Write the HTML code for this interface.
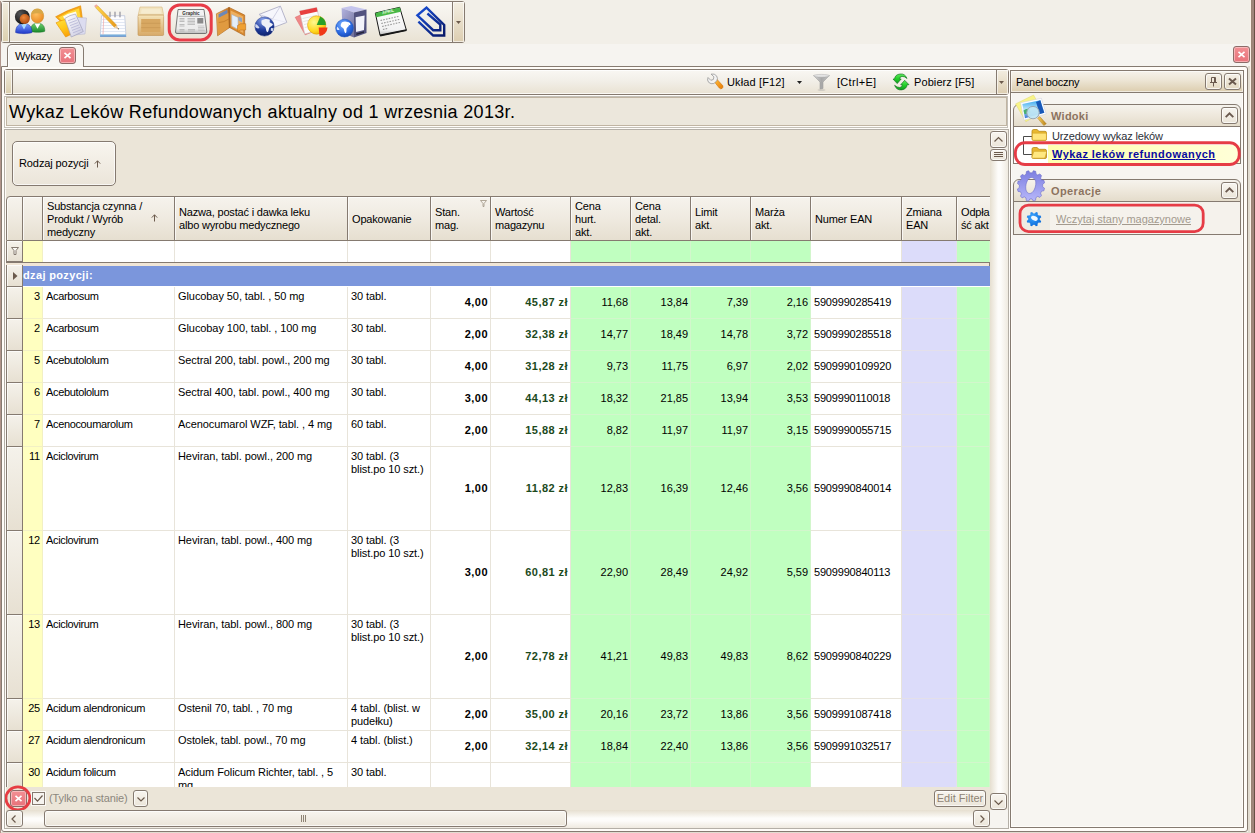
<!DOCTYPE html>
<html lang="pl">
<head>
<meta charset="utf-8">
<title>Wykazy</title>
<style>
*{box-sizing:border-box;margin:0;padding:0}
html,body{width:1255px;height:833px;overflow:hidden}
body{position:relative;background:#f6f4f0;font-family:"Liberation Sans",sans-serif;font-size:11px;letter-spacing:-0.3px;color:#000;line-height:13px}
.abs{position:absolute}
svg{position:absolute;overflow:visible}
#topbg{left:0;top:0;width:1255px;height:44px;background:#f2efe8}
#frameL{left:0;top:1px;width:1px;height:832px;background:#b0948a}
#frameR{left:1248px;top:0;width:7px;height:833px;background:linear-gradient(90deg,#e2dcd0 0,#e2dcd0 2px,#fbefe6 2px,#fbefe6 3px,#9a8474 3px,#9a8474 4px,#a0857a 4px,#a0857a 6px,#685044 6px)}
#frameRtop{left:1248px;top:0;width:2px;height:66px;background:linear-gradient(#f2efe8 0,#f2efe8 44px,#f6f4f0 44px)}
#frameB{left:1px;top:832px;width:1250px;height:1px;background:#e2dcd0}
.tbbg{background:linear-gradient(#f9f7f3,#f2efe8 45%,#e9e2d3);box-shadow:inset 0 0 0 1px rgba(255,255,255,.75)}
#tb{left:1px;top:1px;width:464px;height:42px;border:1px solid #857a70;border-radius:3px}
#tbgrip{left:0;top:0;width:8px;height:40px;border-right:1px solid #857a70;background:linear-gradient(#f1ecde,#dccfae);box-shadow:inset 0 0 0 1px rgba(255,255,255,.7)}
#tbdd{left:450px;top:0;width:12px;height:40px;border-left:1px solid #857a70;background:linear-gradient(#f3eee2,#dccdb0);box-shadow:inset 0 0 0 1px rgba(255,255,255,.6)}
#docframe{left:1px;top:66px;width:1247px;height:766px;border:1px solid #857a70;border-radius:0 3px 3px 3px;background:#fffcf8}
#tab{left:7px;top:44px;width:77px;height:23px;border:1px solid #857a70;border-bottom:none;border-radius:5px 5px 0 0;background:#f8f6f2;box-shadow:inset 1px 1px 0 #fff}
.xbtn{width:17px;height:17px;border:1px solid #8c6c68;border-radius:3px;background:linear-gradient(#f29094,#e8727a);box-shadow:inset 0 0 0 1px rgba(255,220,220,.55)}
#ptb{left:4px;top:69px;width:1005px;height:26px;border:1px solid #857a70;border-radius:3px}
#ptbgrip{left:0;top:0;width:8px;height:24px;border-right:1px solid #857a70;background:linear-gradient(#f1ecde,#dccfae);box-shadow:inset 0 0 0 1px rgba(255,255,255,.7)}
#ptbdd{left:991px;top:0;width:12px;height:24px;border-left:1px solid #857a70;background:linear-gradient(#f3eee2,#dccdb0);box-shadow:inset 0 0 0 1px rgba(255,255,255,.6)}
#titleO{left:4px;top:96px;width:1004px;height:32px;border:1px solid #c4c0b8;background:#fffcf8}
#title{left:6px;top:97px;width:1001px;height:29px;border:1px solid #c0b4a2;background:#ece7dc;font-size:18px;letter-spacing:0.33px;line-height:27px;padding-left:2px;padding-top:1px;white-space:nowrap}
#grid{left:4px;top:129px;width:1005px;height:700px;border:1px solid #b4afa7;background:#fffcf8;overflow:hidden}
#gridin{left:1px;top:0;width:1002px;height:698px;background:#ebe5d8}
.btn{border:1px solid #857a70;border-radius:3px;background:linear-gradient(#f8f5ef,#ebe5d9);box-shadow:inset 0 0 0 1px rgba(255,255,255,.7)}
.hdr{background:linear-gradient(#f6f3ed,#efeae0 50%,#e6dfd0);border-right:1px solid #857a70;border-bottom:1px solid #857a70;border-top:1px solid #857a70;top:67px;height:45px;box-shadow:inset 1px 1px 0 rgba(255,255,255,.7)}
.hdr span{position:absolute;left:4px;white-space:nowrap;letter-spacing:-0.18px}
.cell{white-space:nowrap;overflow:hidden}
.num{text-align:right}
.b{font-weight:bold}
</style>
</head>
<body>
<div class="abs" id="topbg"></div>
<div class="abs" id="docframe"></div>
<div class="abs" id="frameR"></div><div class="abs" id="frameRtop"></div><div class="abs" id="frameL"></div><div class="abs" id="frameB"></div>
<div class="abs tbbg" id="tb"><div class="abs" id="tbgrip"></div><div class="abs" id="tbdd"><svg style="left:3px;top:19px" width="6" height="4"><path d="M0 0h5l-2.5 3z" fill="#6b5a4c"/></svg></div>
<svg style="left:-2px;top:-2px" width="466" height="44" viewBox="0 0 466 44">
<defs>
<radialGradient id="gSkin1" cx="0.4" cy="0.35" r="0.7"><stop offset="0" stop-color="#f08838"/><stop offset="1" stop-color="#a84810"/></radialGradient>
<radialGradient id="gSkin2" cx="0.4" cy="0.35" r="0.7"><stop offset="0" stop-color="#ffc060"/><stop offset="1" stop-color="#e88820"/></radialGradient>
<radialGradient id="gHair" cx="0.35" cy="0.3" r="0.8"><stop offset="0" stop-color="#555"/><stop offset="1" stop-color="#0a0a0a"/></radialGradient>
<linearGradient id="gBlueB" x1="0" y1="0" x2="0" y2="1"><stop offset="0" stop-color="#7aa0ff"/><stop offset="1" stop-color="#2038c8"/></linearGradient>
<linearGradient id="gGreenB" x1="0" y1="0" x2="0" y2="1"><stop offset="0" stop-color="#70d070"/><stop offset="1" stop-color="#1a8a2a"/></linearGradient>
<linearGradient id="gFold" x1="0" y1="0" x2="0.600" y2="1"><stop offset="0" stop-color="#ffe040"/><stop offset="0.500" stop-color="#ffc818"/><stop offset="1" stop-color="#f89808"/></linearGradient>
<linearGradient id="gPaper" x1="0" y1="0" x2="1" y2="1"><stop offset="0" stop-color="#ffffff"/><stop offset="1" stop-color="#c8c8e0"/></linearGradient>
<linearGradient id="gWood" x1="0" y1="0" x2="0" y2="1"><stop offset="0" stop-color="#f3e2b8"/><stop offset="1" stop-color="#d8aa68"/></linearGradient>
<linearGradient id="gNews" x1="0" y1="0" x2="0" y2="1"><stop offset="0" stop-color="#f4f4f4"/><stop offset="0.8" stop-color="#ececec"/><stop offset="1" stop-color="#bdbdbd"/></linearGradient>
<linearGradient id="gWal" x1="0" y1="0" x2="1" y2="0"><stop offset="0" stop-color="#f0b860"/><stop offset="1" stop-color="#c87020"/></linearGradient>
<radialGradient id="gGlobe1" cx="0.400" cy="0.150" r="0.900"><stop offset="0" stop-color="#8aa4ec"/><stop offset="0.6" stop-color="#1e3a9a"/><stop offset="1" stop-color="#0c1e64"/></radialGradient>
<radialGradient id="gGlobe2" cx="0.4" cy="0.3" r="0.8"><stop offset="0" stop-color="#78b0ff"/><stop offset="0.6" stop-color="#2a68e0"/><stop offset="1" stop-color="#1040a8"/></radialGradient>
<radialGradient id="gPie" cx="0.35" cy="0.35" r="0.8"><stop offset="0" stop-color="#fff890"/><stop offset="0.6" stop-color="#ffd820"/><stop offset="1" stop-color="#e8a000"/></radialGradient>
<linearGradient id="gSrv" x1="0" y1="0" x2="0.600" y2="1"><stop offset="0" stop-color="#b4b4e0"/><stop offset="1" stop-color="#74749e"/></linearGradient>
<linearGradient id="gCal" x1="0" y1="0" x2="0" y2="1"><stop offset="0" stop-color="#ffffff"/><stop offset="0.8" stop-color="#f2f2f2"/><stop offset="1" stop-color="#b8b8b8"/></linearGradient>
<linearGradient id="gClip" x1="0" y1="0" x2="1" y2="1"><stop offset="0" stop-color="#1a50d8"/><stop offset="1" stop-color="#081868"/></linearGradient>
<linearGradient id="gPencil" x1="0" y1="0" x2="1" y2="0"><stop offset="0" stop-color="#ffd850"/><stop offset="1" stop-color="#e89818"/></linearGradient>
</defs>

<!-- 1 people -->
<g transform="translate(0 1)">
<path d="M30.400 30.200c0-5 2-8 7.200-8s7.200 3 7.200 8c-2 1.400-12.400 1.400-14.400 0z" fill="url(#gGreenB)" stroke="#187028" stroke-width="0.500"/>
<path d="M34.600 22.600l2.900 5.200 2.900-5.200z" fill="#fff"/>
<ellipse cx="37.400" cy="15" rx="6.300" ry="7" fill="url(#gSkin2)" stroke="#c88820" stroke-width="0.500"/>
<path d="M31.300 13.500c0.300-4 2.800-5.700 6.100-5.700s5.800 1.700 6.100 5.700c-3.800-1.800-8.400-1.800-12.200 0z" fill="#d8a848"/>
<path d="M15.600 31.500c0-5.500 2.500-9 8.200-9s8.200 3.500 8.200 9c-3 1.500-13.400 1.500-16.400 0z" fill="url(#gBlueB)" stroke="#1830a8" stroke-width="0.500"/>
<path d="M21 22.800l3 5.700 3-5.700z" fill="#a8dcff"/>
<circle cx="22.300" cy="15.800" r="7.400" fill="url(#gHair)"/>
<ellipse cx="24.700" cy="18" rx="5" ry="5" fill="url(#gSkin1)"/>
</g>

<!-- 2 folders with documents -->
<g transform="translate(0 1)">
<path d="M55.600 15.800q12-7 25-11l1.800 13-15.400 8.500z" fill="#f8a818" stroke="#e08800" stroke-width="0.600"/>
<path d="M58.500 16.400q10-6 20.500-9.200l1.500 9.500-13.500 7.500z" fill="#ffd838"/>
<path d="M63 15.500q6-3.500 13-5l2 8-10 5z" fill="#fffdf0"/>
<path d="M56 21.800q5-2.500 10-3.500l13.500 11-13.800 6.700z" fill="url(#gFold)" stroke="#e89000" stroke-width="0.600"/>
<path d="M75 16.200l11.500 0.800-1.500 16-11 1z" fill="#dcdcf0" stroke="#b0b0c8" stroke-width="0.500"/>
<path d="M64.800 17.500q5-3.500 10.700-4.500l7.800 17.500-12 5.500z" fill="url(#gPaper)" stroke="#a0a0bc" stroke-width="0.700"/>
<path d="M68 19.800l7.500-2.800M69 22.200l7.800-2.900M70 24.600l8-3M71 27l8.200-3.100M72 29.400l8.400-3.200M73 31.800l8.400-3.200" stroke="#b4b4d4" stroke-width="0.800"/>
</g>

<!-- 3 notepad with pencil -->
<g>
<path d="M101.500 15.700l23.200 0 1.200 19.300-25.600 0z" fill="#fdfdff" stroke="#b4c0d8" stroke-width="0.700"/>
<path d="M100.200 34.500h25.800l0.200 2.300h-26.200z" fill="#7cb4e0"/>
<path d="M100.200 36.300h26" stroke="#5a78b8" stroke-width="0.600"/>
<path d="M101.400 19.500h23.400M101.200 22.500h23.800M101 25.500h24.200M100.800 28.500h24.600M100.600 31.500h25" stroke="#d4dcee" stroke-width="0.700"/>
<path d="M103.800 16l-0.800 18.500" stroke="#f0a8a8" stroke-width="0.700"/>
<path d="M110 12.200v4.600M115 12.200v4.600M120 12.200v4.600" stroke="#a4a4ac" stroke-width="1.500" stroke-linecap="round"/>
<path d="M95.500 7.600l2.200-1.800 19 19.400-2.400 2.100z" fill="url(#gPencil)" stroke="#c88810" stroke-width="0.400"/>
<path d="M114.300 27.300l2.400-2.100 2.200 4.500z" fill="#e8c898"/>
<path d="M117.600 28.400l1.300 1.300-0.300-1.600z" fill="#444"/>
<path d="M95.500 7.600l2.200-1.800-1.400-1.500-2.200 1.800z" fill="#f0a8a0"/>
</g>

<!-- 4 wooden crate -->
<g>
<path d="M140 7l22 0 1.600 8h-25.400z" fill="#f2e4c0" stroke="#d8b880" stroke-width="0.600"/>
<path d="M141.800 9.300h18.400l0.900 4.200h-20.200z" fill="#f6ecd0"/>
<rect x="138" y="15" width="25.600" height="20.500" rx="1" fill="url(#gWood)" stroke="#c09050" stroke-width="0.600"/>
<rect x="141.200" y="19" width="19.200" height="13" fill="#d8a862"/>
<path d="M141.200 23.300h19.200M141.200 27.600h19.200" stroke="#c49450" stroke-width="0.600"/>
<path d="M138.300 16.600h25" stroke="#f4e2b4" stroke-width="1"/>
</g>

<!-- 5 newspaper -->
<g>
<path d="M178 9.500h26l2.800 22.500q0 1.500-1.500 1.500h-28.300q-1.500 0-1.500-1.500z" fill="url(#gNews)" stroke="#5c5c5c" stroke-width="0.8"/>
<path d="M178.500 16.300h25.300" stroke="#888" stroke-width="0.6"/>
<text x="191" y="15.300" text-anchor="middle" font-family="Liberation Sans, sans-serif" font-weight="bold" font-size="4.600" letter-spacing="0" fill="#333">Graphic</text>
<path d="M179.500 18.500h5M179.500 20h5M179.500 21.500h5M179.500 24.500h5M179.500 26h5M179.500 29.500h5M179.500 31h5" stroke="#b0b0b0" stroke-width="0.8"/>
<path d="M187.500 18.500h7.500M187.500 20h7.500M187.500 21.500h7.500M187.500 23h7.500M187.500 24.500h7.500M188 29.500h7M188 31h7" stroke="#b4b4b4" stroke-width="0.8"/>
<rect x="197.300" y="18" width="6" height="5.500" fill="#8a8a8a"/>
<path d="M197.800 26h6.500M198 27.500h6.500M198 29h6.500M198.200 30.500h6.500" stroke="#c0c0c0" stroke-width="0.8"/>
<rect x="169.200" y="5" width="42" height="35" rx="10.500" fill="none" stroke="#e83c48" stroke-width="3"/>
</g>

<!-- 6 wallet -->
<g>
<path d="M216.400 13.800l12.700-6.400 0.500 20.100-12 8.300z" fill="url(#gWal)" stroke="#a86018" stroke-width="0.600"/>
<path d="M218.500 14.200l8.800-4.400 0.200 3.500-8.800 4.600z" fill="#6c88b8"/>
<path d="M217.500 18.500l11.700-6 0.300 14.800-11.500 8z" fill="#e09a40"/>
<path d="M218.800 22.500q5 0 10-3.500" stroke="#b87020" stroke-width="0.600" fill="none"/>
<path d="M229.100 7.400l15.600 7.700 0 20.700-15.100-8.300z" fill="#d88a30" stroke="#a86018" stroke-width="0.600"/>
<path d="M230.600 10.400l12.600 6.200 0 16.400-12.400-6.800z" fill="#eeb060"/>
<path d="M231.700 14.400l6.300 3 0.200 12-6.300-3.400z" fill="#e4eef8" stroke="#98a8c0" stroke-width="0.500"/>
<path d="M238.500 16.500l3.500 1.700v4l-3.500-1.700z" fill="#8ea4c4"/>
<path d="M237.500 25.500l3-1.800h5.200v6.300h-5l-3.200 1.500z" fill="#f0a030" stroke="#b86818" stroke-width="0.500"/>
<path d="M228.300 7.600l1.600 0.200 0.400 19.800-1.400 0.600z" fill="#a86420"/>
</g>

<!-- 7 globe + envelope -->
<g>
<path d="M259.100 14.400l21.300-8.300 6.400 16.300-12.400 4.800z" fill="#f6f6fc" stroke="#9a9ab8" stroke-width="0.700"/>
<path d="M259.100 14.400l13.400 4.600 7.900-12.900" stroke="#c0c0d8" stroke-width="0.700" fill="none"/>
<path d="M272.500 19l14.300 3.400M272.500 19l1.900 8.200" stroke="#dcdcec" stroke-width="0.500" fill="none"/>
<circle cx="264.500" cy="26.500" r="9.600" fill="url(#gGlobe1)" stroke="#20388c" stroke-width="0.500"/>
<path d="M261.500 20.500c2.500-1.800 5.500-2 8-1 1 1.500-0.800 2.500 1 3.300 1.200 0.800 2.200 0.500 2.400 2-1 1.800-2.800 1.500-3.700 3.200-0.700 1.600-0.200 3-1.600 4.300-1.700-0.900-1.400-3.200-2.100-4.800-1-1.500-3.200-1.800-3.900-3.500-0.200-1.300-0.300-2.500-0.100-3.500z" fill="#eef0f8"/>
<path d="M255.500 24c1.800 0.600 3 2.100 4 3.800-1.300 1.200-2.800 0.600-4.300-0.800z" fill="#d0d8f0"/>
<path d="M271 28l2.500 0.200-0.800 3.300-2-1z" fill="#d0d8f0"/>
</g>

<!-- 8 calendar + pie chart -->
<g>
<path d="M295.200 17.300l8-3.500 8.500 18.500-6.500 2.500z" fill="#f08888" stroke="#d86060" stroke-width="0.5"/>
<path d="M299.500 11.100l17.200-3.600 5 22-17 4.500z" fill="#fbfbfb" stroke="#c8b8b8" stroke-width="0.6"/>
<path d="M299.500 11.100l17.200-3.600 0.900 4.100-17 3.700z" fill="#e84040"/>
<path d="M302.500 18.500l14-3M303.300 21.500l8-1.800M304 24.500l7-1.500M304.800 27.500l7-1.500" stroke="#d8d8d8" stroke-width="0.7"/>
<circle cx="316.700" cy="25" r="9.200" fill="url(#gPie)" stroke="#d89800" stroke-width="0.5"/>
<path d="M316.700 25l3.500-8.500a9.200 9.200 0 0 1 5.700 8.500z" fill="#28a028"/>
<path d="M318.700 27.500h8.800a9 9 0 0 1-8 8.500z" fill="#f03818"/>
</g>

<!-- 9 server + globe -->
<g>
<path d="M341.600 8l9.600-2 15.300 3.600-12.500 3z" fill="#c4c4ec"/>
<path d="M341.600 8l12.400 4.600 0 25-11.400-4.600z" fill="url(#gSrv)"/>
<path d="M354 12.600l12.500-3 0 23.400-12.500 4.600z" fill="#52527e"/>
<path d="M355.600 17.300l9-1.900-0.600 14.600-7.900 2z" fill="#f2f2fa"/>
<path d="M356.300 33.500l7.700-2.200v1.400l-7.700 2.300z" fill="#24243a"/>
<circle cx="344.500" cy="28.100" r="8.900" fill="url(#gGlobe2)" stroke="#1c50b8" stroke-width="0.500"/>
<path d="M342 22.200c2-1 4-1 6 0 1 1.200-0.500 2.200 1 3 -0.500 1.800-2 2-2.500 3.500 -0.300 1.500 0.500 3-0.800 4.500 -1.500-0.800-1.500-3-2-4.500 -1-1.200-2.500-1.500-3-3 0-1.200 0.500-2.500 1.300-3.500z" fill="#fff"/>
<path d="M347.500 21.800l2.500 1.200 0.500 2-2 0.200z" fill="#fff"/>
<path d="M337 26.700c1 0.500 2 1.500 2.500 3 -0.800 0.500-1.800 0.500-2.800-0.500z" fill="#e0ecff"/>
</g>

<!-- 10 calendar -->
<g>
<path d="M375.300 13l24.400-5.700 6.700 22.900-26.300 5.300z" fill="url(#gCal)" stroke="#181818" stroke-width="1"/>
<path d="M375.300 13l24.400-5.700 1.300 4.400-24.600 5.500z" fill="#48b848"/>
<path d="M380.100 35.500l26.300-5.300" stroke="#181818" stroke-width="1.800"/>
<text x="388.300" y="12.800" text-anchor="middle" transform="rotate(-13 388.300 12.800)" font-family="Liberation Sans, sans-serif" font-weight="bold" font-size="4" letter-spacing="0" fill="#e8ffe8">APRIL</text>
<path d="M380.500 20.500l19-4.300M381.300 23.500l19-4.300M382.100 26.500l19-4.300M382.900 29.500l5-1.100" stroke="#9a9a9a" stroke-width="1.100" stroke-dasharray="1.600 1.200"/>
</g>

<!-- 11 paperclip -->
<g fill="none" stroke="url(#gClip)" stroke-width="2.400" stroke-linejoin="miter">
<path d="M418.400 21.600l14.800 13.900h11v-10.600l-17.700-17.200-9.100 7.700 15.800 14.800h7.100v-5.700l-12.900-11"/>
</g>
</svg>

</div>
<div class="abs" id="tab"><span class="abs" style="left:7px;top:5px">Wykazy</span><div class="abs xbtn" style="left:51px;top:2px"><svg style="left:4px;top:4px" width="7" height="7"><path d="M0.500 0.800l6 5.400M6.500 0.800l-6 5.400" stroke="#fff" stroke-width="1.600" fill="none"/></svg></div></div>
<div class="abs xbtn" style="left:1233px;top:46px"><svg style="left:4px;top:4px" width="7" height="7"><path d="M0.500 0.800l6 5.400M6.500 0.800l-6 5.400" stroke="#fff" stroke-width="1.600" fill="none"/></svg></div>
<div class="abs tbbg" id="ptb"><div class="abs" id="ptbgrip"></div><div class="abs" id="ptbdd"><svg style="left:2px;top:11px" width="6" height="4"><path d="M0 0h5l-2.5 3z" fill="#6b5a4c"/></svg></div>
<span class="abs" style="left:722px;top:6px;white-space:nowrap;letter-spacing:0.14px">Układ [F12]</span>
<svg style="left:792px;top:11px" width="6" height="4"><path d="M0 0h5l-2.5 3z" fill="#222"/></svg>
<span class="abs" style="left:832px;top:6px;white-space:nowrap;letter-spacing:0.3px">[Ctrl+E]</span>
<span class="abs" style="left:909px;top:6px;white-space:nowrap;letter-spacing:0.09px">Pobierz [F5]</span>
<svg style="left:-5px;top:-70px" width="1010" height="96" viewBox="0 0 1010 96">
<defs>
<linearGradient id="gWr" x1="0" y1="0" x2="1" y2="1"><stop offset="0" stop-color="#ffc040"/><stop offset="1" stop-color="#e87800"/></linearGradient>
<linearGradient id="gFun" x1="0" y1="0" x2="1" y2="0"><stop offset="0" stop-color="#d8d8d8"/><stop offset="0.5" stop-color="#a8a8a8"/><stop offset="1" stop-color="#c8c8c8"/></linearGradient>
<linearGradient id="gRef" x1="0" y1="0" x2="0" y2="1"><stop offset="0" stop-color="#60e860"/><stop offset="0.500" stop-color="#22d028"/><stop offset="1" stop-color="#109a20"/></linearGradient>
</defs>
<!-- wrench -->
<path d="M714.500 82l2.600-2.600 5.600 6.200q1 1.800-0.600 2.800t-2.800-0.400z" fill="url(#gWr)" stroke="#c86800" stroke-width="0.5"/>
<path d="M708 77.500l2.800 2.800 2.500-0.800 0.600-2.600-2.800-2.800q3.500-0.800 5.500 1.800 1.500 2.500 0.300 4.800l-3 2.800q-3 1-5.300-1.200-1.800-2.200-0.600-4.800z" fill="#f2f2f2" stroke="#8c8c8c" stroke-width="0.7"/>
<!-- funnel -->
<path d="M813.600 75.500h15.800l-6.400 6.500v6.500l-3 0.800v-7.300z" fill="url(#gFun)" stroke="#909090" stroke-width="0.5"/>
<ellipse cx="821.500" cy="75.800" rx="7.900" ry="1.400" fill="#e4e4e4" stroke="#a0a0a0" stroke-width="0.4"/>
<ellipse cx="821.500" cy="90" rx="4" ry="0.800" fill="#c8c4bc"/>
<!-- refresh -->
<path d="M907 78.500Q905 73.300 900 74Q895 74.600 894.500 79L893 79L897.200 83.600L901.200 79L899.600 79Q899.800 76.600 902 76.400Q904.500 76.200 907 78.500Z" fill="url(#gRef)" stroke="#0c6a1a" stroke-width="0.600" stroke-linejoin="round"/>
<path d="M894.600 85.300Q896.500 90.400 901.500 89.900Q906.500 89.300 907.200 84.700L909 84.700L904.700 80.300L900.700 84.700L902.400 84.700Q902 87.300 899.800 87.500Q897 87.500 894.600 85.300Z" fill="url(#gRef)" stroke="#0c6a1a" stroke-width="0.600" stroke-linejoin="round"/>
</svg>

</div>
<div class="abs" id="titleO"></div>
<div class="abs" id="title">Wykaz Leków Refundowanych aktualny od 1 wrzesnia 2013r.</div>
<div class="abs" id="grid"><div class="abs" id="gridin">
<div class="abs btn" style="left:6px;top:11px;width:104px;height:45px;border-radius:5px"><span class="abs" style="left:6px;top:15px;white-space:nowrap;letter-spacing:-0.1px">Rodzaj pozycji</span><svg style="left:81px;top:18px" width="8" height="8"><path d="M3.500 0.800v6.700M0.800 3.600l2.700-2.800 2.700 2.800" stroke="#6b5a4c" fill="none" stroke-width="1"/></svg></div>
<div class="abs hdr" style="left:0px;top:66px;width:17px;height:45px;border-left:1px solid #857a70;border-radius:4px 0 0 0"></div>
<div class="abs hdr" style="left:17px;top:66px;width:20px;height:45px"></div>
<div class="abs hdr" style="left:37px;top:66px;width:132px;height:45px"><span style="top:3px">Substancja czynna /</span><span style="top:16px">Produkt / Wyrób</span><span style="top:29px">medyczny</span><svg style="left:108px;top:17px" width="8" height="8"><path d="M3.500 0.800v6.700M0.800 3.600l2.700-2.800 2.700 2.800" stroke="#6b5a4c" fill="none" stroke-width="1"/></svg></div>
<div class="abs hdr" style="left:169px;top:66px;width:173px;height:45px"><span style="top:9px">Nazwa, postać i dawka leku</span><span style="top:22px">albo wyrobu medycznego</span></div>
<div class="abs hdr" style="left:342px;top:66px;width:83px;height:45px"><span style="top:16px">Opakowanie</span></div>
<div class="abs hdr" style="left:425px;top:66px;width:60px;height:45px"><span style="top:9px">Stan.</span><span style="top:22px">mag.</span><svg style="left:49px;top:3px" width="7" height="7"><path d="M0.5 0.5h6l-2.5 3v3h-1v-3z" stroke="#a09484" fill="#f6f3ed" stroke-width="0.8"/></svg></div>
<div class="abs hdr" style="left:485px;top:66px;width:80px;height:45px"><span style="top:9px">Wartość</span><span style="top:22px">magazynu</span></div>
<div class="abs hdr" style="left:565px;top:66px;width:60px;height:45px"><span style="top:3px">Cena</span><span style="top:16px">hurt.</span><span style="top:29px">akt.</span></div>
<div class="abs hdr" style="left:625px;top:66px;width:60px;height:45px"><span style="top:3px">Cena</span><span style="top:16px">detal.</span><span style="top:29px">akt.</span></div>
<div class="abs hdr" style="left:685px;top:66px;width:60px;height:45px"><span style="top:9px">Limit</span><span style="top:22px">akt.</span></div>
<div class="abs hdr" style="left:745px;top:66px;width:60px;height:45px"><span style="top:9px">Marża</span><span style="top:22px">akt.</span></div>
<div class="abs hdr" style="left:805px;top:66px;width:91px;height:45px"><span style="top:16px">Numer EAN</span></div>
<div class="abs hdr" style="left:896px;top:66px;width:55px;height:45px"><span style="top:9px">Zmiana</span><span style="top:22px">EAN</span></div>
<div class="abs hdr" style="left:951px;top:66px;width:33px;height:45px;border-right:none;overflow:hidden"><span style="top:9px">Odpła</span><span style="top:22px">ść akt</span></div>
<div class="abs" style="left:984px;top:0;width:18px;height:698px;background:linear-gradient(90deg,#e6dfd0,#fdfcfa 45%,#fdfcfa 60%,#efeae0)"></div>
<div class="abs" style="left:17px;top:111px;width:20px;height:546px;background:#ffffc0;border-right:1px solid #f2f0c4"></div>
<div class="abs" style="left:37px;top:111px;width:132px;height:546px;background:#fff;border-right:1px solid #e8e4da"></div>
<div class="abs" style="left:169px;top:111px;width:173px;height:546px;background:#fff;border-right:1px solid #e8e4da"></div>
<div class="abs" style="left:342px;top:111px;width:83px;height:546px;background:#fff;border-right:1px solid #e8e4da"></div>
<div class="abs" style="left:425px;top:111px;width:60px;height:546px;background:#fff;border-right:1px solid #e8e4da"></div>
<div class="abs" style="left:485px;top:111px;width:80px;height:546px;background:#fff;border-right:1px solid #e8e4da"></div>
<div class="abs" style="left:565px;top:111px;width:60px;height:546px;background:#c0ffc0;border-right:1px solid #d2f6cc"></div>
<div class="abs" style="left:625px;top:111px;width:60px;height:546px;background:#c0ffc0;border-right:1px solid #d2f6cc"></div>
<div class="abs" style="left:685px;top:111px;width:60px;height:546px;background:#c0ffc0;border-right:1px solid #d2f6cc"></div>
<div class="abs" style="left:745px;top:111px;width:60px;height:546px;background:#c0ffc0;border-right:1px solid #d2f6cc"></div>
<div class="abs" style="left:805px;top:111px;width:91px;height:546px;background:#fff;border-right:1px solid #e8e4da"></div>
<div class="abs" style="left:896px;top:111px;width:55px;height:546px;background:#dcdcfa;border-right:1px solid #e4e0ea"></div>
<div class="abs" style="left:951px;top:111px;width:33px;height:546px;background:#c0ffc0;border-right:1px solid #d2f6cc"></div>
<div class="abs" style="left:0;top:111px;width:17px;height:21px;border:1px solid #857a70;border-top:none;background:linear-gradient(#f5f2eb,#e7e0d2);box-shadow:inset 1px 1px 0 rgba(255,255,255,.7)"></div>
<svg style="left:5px;top:117px" width="8" height="9"><path d="M0.500 0.500h7l-2.500 3v4h-2v-4z" stroke="#857a70" fill="#fbf9f5" stroke-width="1"/></svg>
<div class="abs" style="left:0;top:132px;width:984px;height:4px;background:#f1e6d6;border-top:1px solid #857a70;border-right:1px solid #857a70"></div>
<div class="abs" style="left:17px;top:136px;width:967px;height:20px;background:#7b96dc"></div>
<div class="abs" style="left:17px;top:156px;width:967px;height:1px;background:#fff"></div>
<div class="abs" style="left:0;top:135px;width:17px;height:22px;border:1px solid #857a70;border-top:none;background:linear-gradient(#f5f2eb,#e7e0d2);box-shadow:inset 1px 1px 0 rgba(255,255,255,.7)"></div>
<svg style="left:7px;top:142px" width="5" height="9"><path d="M0 0l4.500 4L0 8z" fill="#6b5a4c"/></svg>
<span class="abs b" style="left:17px;top:139px;color:#fff;white-space:nowrap;letter-spacing:0.35px">dzaj pozycji:</span>
<div class="abs" style="left:17px;top:188px;width:20px;height:1px;background:#f2f0c4"></div>
<div class="abs" style="left:37px;top:188px;width:132px;height:1px;background:#e8e4da"></div>
<div class="abs" style="left:169px;top:188px;width:173px;height:1px;background:#e8e4da"></div>
<div class="abs" style="left:342px;top:188px;width:83px;height:1px;background:#e8e4da"></div>
<div class="abs" style="left:425px;top:188px;width:60px;height:1px;background:#e8e4da"></div>
<div class="abs" style="left:485px;top:188px;width:80px;height:1px;background:#e8e4da"></div>
<div class="abs" style="left:565px;top:188px;width:60px;height:1px;background:#d2f6cc"></div>
<div class="abs" style="left:625px;top:188px;width:60px;height:1px;background:#d2f6cc"></div>
<div class="abs" style="left:685px;top:188px;width:60px;height:1px;background:#d2f6cc"></div>
<div class="abs" style="left:745px;top:188px;width:60px;height:1px;background:#d2f6cc"></div>
<div class="abs" style="left:805px;top:188px;width:91px;height:1px;background:#e8e4da"></div>
<div class="abs" style="left:896px;top:188px;width:55px;height:1px;background:#e4e0ea"></div>
<div class="abs" style="left:951px;top:188px;width:33px;height:1px;background:#d2f6cc"></div>
<div class="abs" style="left:0;top:157px;width:17px;height:32px;border:1px solid #857a70;border-top:none;background:linear-gradient(#f5f2eb,#e7e0d2);box-shadow:inset 1px 1px 0 rgba(255,255,255,.7)"></div>
<div class="abs cell num" style="left:17px;top:160px;width:20px;padding-right:3px;letter-spacing:-0.2px">3</div>
<div class="abs cell " style="left:40px;top:160px;width:129px;letter-spacing:-0.35px">Acarbosum</div>
<div class="abs cell " style="left:172px;top:160px;width:170px;letter-spacing:-0.08px">Glucobay 50, tabl. , 50 mg</div>
<div class="abs cell " style="left:345px;top:160px;width:80px;letter-spacing:-0.08px">30 tabl.</div>
<div class="abs cell num b" style="left:425px;top:166px;width:60px;padding-right:3px;letter-spacing:0.45px">4,00</div>
<div class="abs cell num b" style="left:485px;top:166px;width:80px;padding-right:3px;letter-spacing:0.45px;color:#1c4a1c">45,87 zł</div>
<div class="abs cell num" style="left:565px;top:166px;width:60px;padding-right:3px;letter-spacing:-0.02px">11,68</div>
<div class="abs cell num" style="left:625px;top:166px;width:60px;padding-right:3px;letter-spacing:-0.02px">13,84</div>
<div class="abs cell num" style="left:685px;top:166px;width:60px;padding-right:3px;letter-spacing:-0.02px">7,39</div>
<div class="abs cell num" style="left:745px;top:166px;width:60px;padding-right:3px;letter-spacing:-0.02px">2,16</div>
<div class="abs cell " style="left:808px;top:166px;width:88px;letter-spacing:-0.19px">5909990285419</div>
<div class="abs" style="left:17px;top:220px;width:20px;height:1px;background:#f2f0c4"></div>
<div class="abs" style="left:37px;top:220px;width:132px;height:1px;background:#e8e4da"></div>
<div class="abs" style="left:169px;top:220px;width:173px;height:1px;background:#e8e4da"></div>
<div class="abs" style="left:342px;top:220px;width:83px;height:1px;background:#e8e4da"></div>
<div class="abs" style="left:425px;top:220px;width:60px;height:1px;background:#e8e4da"></div>
<div class="abs" style="left:485px;top:220px;width:80px;height:1px;background:#e8e4da"></div>
<div class="abs" style="left:565px;top:220px;width:60px;height:1px;background:#d2f6cc"></div>
<div class="abs" style="left:625px;top:220px;width:60px;height:1px;background:#d2f6cc"></div>
<div class="abs" style="left:685px;top:220px;width:60px;height:1px;background:#d2f6cc"></div>
<div class="abs" style="left:745px;top:220px;width:60px;height:1px;background:#d2f6cc"></div>
<div class="abs" style="left:805px;top:220px;width:91px;height:1px;background:#e8e4da"></div>
<div class="abs" style="left:896px;top:220px;width:55px;height:1px;background:#e4e0ea"></div>
<div class="abs" style="left:951px;top:220px;width:33px;height:1px;background:#d2f6cc"></div>
<div class="abs" style="left:0;top:189px;width:17px;height:32px;border:1px solid #857a70;border-top:none;background:linear-gradient(#f5f2eb,#e7e0d2);box-shadow:inset 1px 1px 0 rgba(255,255,255,.7)"></div>
<div class="abs cell num" style="left:17px;top:192px;width:20px;padding-right:3px;letter-spacing:-0.2px">2</div>
<div class="abs cell " style="left:40px;top:192px;width:129px;letter-spacing:-0.35px">Acarbosum</div>
<div class="abs cell " style="left:172px;top:192px;width:170px;letter-spacing:-0.08px">Glucobay 100, tabl. , 100 mg</div>
<div class="abs cell " style="left:345px;top:192px;width:80px;letter-spacing:-0.08px">30 tabl.</div>
<div class="abs cell num b" style="left:425px;top:198px;width:60px;padding-right:3px;letter-spacing:0.45px">2,00</div>
<div class="abs cell num b" style="left:485px;top:198px;width:80px;padding-right:3px;letter-spacing:0.45px;color:#1c4a1c">32,38 zł</div>
<div class="abs cell num" style="left:565px;top:198px;width:60px;padding-right:3px;letter-spacing:-0.02px">14,77</div>
<div class="abs cell num" style="left:625px;top:198px;width:60px;padding-right:3px;letter-spacing:-0.02px">18,49</div>
<div class="abs cell num" style="left:685px;top:198px;width:60px;padding-right:3px;letter-spacing:-0.02px">14,78</div>
<div class="abs cell num" style="left:745px;top:198px;width:60px;padding-right:3px;letter-spacing:-0.02px">3,72</div>
<div class="abs cell " style="left:808px;top:198px;width:88px;letter-spacing:-0.19px">5909990285518</div>
<div class="abs" style="left:17px;top:252px;width:20px;height:1px;background:#f2f0c4"></div>
<div class="abs" style="left:37px;top:252px;width:132px;height:1px;background:#e8e4da"></div>
<div class="abs" style="left:169px;top:252px;width:173px;height:1px;background:#e8e4da"></div>
<div class="abs" style="left:342px;top:252px;width:83px;height:1px;background:#e8e4da"></div>
<div class="abs" style="left:425px;top:252px;width:60px;height:1px;background:#e8e4da"></div>
<div class="abs" style="left:485px;top:252px;width:80px;height:1px;background:#e8e4da"></div>
<div class="abs" style="left:565px;top:252px;width:60px;height:1px;background:#d2f6cc"></div>
<div class="abs" style="left:625px;top:252px;width:60px;height:1px;background:#d2f6cc"></div>
<div class="abs" style="left:685px;top:252px;width:60px;height:1px;background:#d2f6cc"></div>
<div class="abs" style="left:745px;top:252px;width:60px;height:1px;background:#d2f6cc"></div>
<div class="abs" style="left:805px;top:252px;width:91px;height:1px;background:#e8e4da"></div>
<div class="abs" style="left:896px;top:252px;width:55px;height:1px;background:#e4e0ea"></div>
<div class="abs" style="left:951px;top:252px;width:33px;height:1px;background:#d2f6cc"></div>
<div class="abs" style="left:0;top:221px;width:17px;height:32px;border:1px solid #857a70;border-top:none;background:linear-gradient(#f5f2eb,#e7e0d2);box-shadow:inset 1px 1px 0 rgba(255,255,255,.7)"></div>
<div class="abs cell num" style="left:17px;top:224px;width:20px;padding-right:3px;letter-spacing:-0.2px">5</div>
<div class="abs cell " style="left:40px;top:224px;width:129px;letter-spacing:-0.35px">Acebutololum</div>
<div class="abs cell " style="left:172px;top:224px;width:170px;letter-spacing:-0.08px">Sectral 200, tabl. powl., 200 mg</div>
<div class="abs cell " style="left:345px;top:224px;width:80px;letter-spacing:-0.08px">30 tabl.</div>
<div class="abs cell num b" style="left:425px;top:230px;width:60px;padding-right:3px;letter-spacing:0.45px">4,00</div>
<div class="abs cell num b" style="left:485px;top:230px;width:80px;padding-right:3px;letter-spacing:0.45px;color:#1c4a1c">31,28 zł</div>
<div class="abs cell num" style="left:565px;top:230px;width:60px;padding-right:3px;letter-spacing:-0.02px">9,73</div>
<div class="abs cell num" style="left:625px;top:230px;width:60px;padding-right:3px;letter-spacing:-0.02px">11,75</div>
<div class="abs cell num" style="left:685px;top:230px;width:60px;padding-right:3px;letter-spacing:-0.02px">6,97</div>
<div class="abs cell num" style="left:745px;top:230px;width:60px;padding-right:3px;letter-spacing:-0.02px">2,02</div>
<div class="abs cell " style="left:808px;top:230px;width:88px;letter-spacing:-0.19px">5909990109920</div>
<div class="abs" style="left:17px;top:284px;width:20px;height:1px;background:#f2f0c4"></div>
<div class="abs" style="left:37px;top:284px;width:132px;height:1px;background:#e8e4da"></div>
<div class="abs" style="left:169px;top:284px;width:173px;height:1px;background:#e8e4da"></div>
<div class="abs" style="left:342px;top:284px;width:83px;height:1px;background:#e8e4da"></div>
<div class="abs" style="left:425px;top:284px;width:60px;height:1px;background:#e8e4da"></div>
<div class="abs" style="left:485px;top:284px;width:80px;height:1px;background:#e8e4da"></div>
<div class="abs" style="left:565px;top:284px;width:60px;height:1px;background:#d2f6cc"></div>
<div class="abs" style="left:625px;top:284px;width:60px;height:1px;background:#d2f6cc"></div>
<div class="abs" style="left:685px;top:284px;width:60px;height:1px;background:#d2f6cc"></div>
<div class="abs" style="left:745px;top:284px;width:60px;height:1px;background:#d2f6cc"></div>
<div class="abs" style="left:805px;top:284px;width:91px;height:1px;background:#e8e4da"></div>
<div class="abs" style="left:896px;top:284px;width:55px;height:1px;background:#e4e0ea"></div>
<div class="abs" style="left:951px;top:284px;width:33px;height:1px;background:#d2f6cc"></div>
<div class="abs" style="left:0;top:253px;width:17px;height:32px;border:1px solid #857a70;border-top:none;background:linear-gradient(#f5f2eb,#e7e0d2);box-shadow:inset 1px 1px 0 rgba(255,255,255,.7)"></div>
<div class="abs cell num" style="left:17px;top:256px;width:20px;padding-right:3px;letter-spacing:-0.2px">6</div>
<div class="abs cell " style="left:40px;top:256px;width:129px;letter-spacing:-0.35px">Acebutololum</div>
<div class="abs cell " style="left:172px;top:256px;width:170px;letter-spacing:-0.08px">Sectral 400, tabl. powl., 400 mg</div>
<div class="abs cell " style="left:345px;top:256px;width:80px;letter-spacing:-0.08px">30 tabl.</div>
<div class="abs cell num b" style="left:425px;top:262px;width:60px;padding-right:3px;letter-spacing:0.45px">3,00</div>
<div class="abs cell num b" style="left:485px;top:262px;width:80px;padding-right:3px;letter-spacing:0.45px;color:#1c4a1c">44,13 zł</div>
<div class="abs cell num" style="left:565px;top:262px;width:60px;padding-right:3px;letter-spacing:-0.02px">18,32</div>
<div class="abs cell num" style="left:625px;top:262px;width:60px;padding-right:3px;letter-spacing:-0.02px">21,85</div>
<div class="abs cell num" style="left:685px;top:262px;width:60px;padding-right:3px;letter-spacing:-0.02px">13,94</div>
<div class="abs cell num" style="left:745px;top:262px;width:60px;padding-right:3px;letter-spacing:-0.02px">3,53</div>
<div class="abs cell " style="left:808px;top:262px;width:88px;letter-spacing:-0.19px">5909990110018</div>
<div class="abs" style="left:17px;top:316px;width:20px;height:1px;background:#f2f0c4"></div>
<div class="abs" style="left:37px;top:316px;width:132px;height:1px;background:#e8e4da"></div>
<div class="abs" style="left:169px;top:316px;width:173px;height:1px;background:#e8e4da"></div>
<div class="abs" style="left:342px;top:316px;width:83px;height:1px;background:#e8e4da"></div>
<div class="abs" style="left:425px;top:316px;width:60px;height:1px;background:#e8e4da"></div>
<div class="abs" style="left:485px;top:316px;width:80px;height:1px;background:#e8e4da"></div>
<div class="abs" style="left:565px;top:316px;width:60px;height:1px;background:#d2f6cc"></div>
<div class="abs" style="left:625px;top:316px;width:60px;height:1px;background:#d2f6cc"></div>
<div class="abs" style="left:685px;top:316px;width:60px;height:1px;background:#d2f6cc"></div>
<div class="abs" style="left:745px;top:316px;width:60px;height:1px;background:#d2f6cc"></div>
<div class="abs" style="left:805px;top:316px;width:91px;height:1px;background:#e8e4da"></div>
<div class="abs" style="left:896px;top:316px;width:55px;height:1px;background:#e4e0ea"></div>
<div class="abs" style="left:951px;top:316px;width:33px;height:1px;background:#d2f6cc"></div>
<div class="abs" style="left:0;top:285px;width:17px;height:32px;border:1px solid #857a70;border-top:none;background:linear-gradient(#f5f2eb,#e7e0d2);box-shadow:inset 1px 1px 0 rgba(255,255,255,.7)"></div>
<div class="abs cell num" style="left:17px;top:288px;width:20px;padding-right:3px;letter-spacing:-0.2px">7</div>
<div class="abs cell " style="left:40px;top:288px;width:129px;letter-spacing:-0.35px">Acenocoumarolum</div>
<div class="abs cell " style="left:172px;top:288px;width:170px;letter-spacing:-0.08px">Acenocumarol WZF, tabl. , 4 mg</div>
<div class="abs cell " style="left:345px;top:288px;width:80px;letter-spacing:-0.08px">60 tabl.</div>
<div class="abs cell num b" style="left:425px;top:294px;width:60px;padding-right:3px;letter-spacing:0.45px">2,00</div>
<div class="abs cell num b" style="left:485px;top:294px;width:80px;padding-right:3px;letter-spacing:0.45px;color:#1c4a1c">15,88 zł</div>
<div class="abs cell num" style="left:565px;top:294px;width:60px;padding-right:3px;letter-spacing:-0.02px">8,82</div>
<div class="abs cell num" style="left:625px;top:294px;width:60px;padding-right:3px;letter-spacing:-0.02px">11,97</div>
<div class="abs cell num" style="left:685px;top:294px;width:60px;padding-right:3px;letter-spacing:-0.02px">11,97</div>
<div class="abs cell num" style="left:745px;top:294px;width:60px;padding-right:3px;letter-spacing:-0.02px">3,15</div>
<div class="abs cell " style="left:808px;top:294px;width:88px;letter-spacing:-0.19px">5909990055715</div>
<div class="abs" style="left:17px;top:400px;width:20px;height:1px;background:#f2f0c4"></div>
<div class="abs" style="left:37px;top:400px;width:132px;height:1px;background:#e8e4da"></div>
<div class="abs" style="left:169px;top:400px;width:173px;height:1px;background:#e8e4da"></div>
<div class="abs" style="left:342px;top:400px;width:83px;height:1px;background:#e8e4da"></div>
<div class="abs" style="left:425px;top:400px;width:60px;height:1px;background:#e8e4da"></div>
<div class="abs" style="left:485px;top:400px;width:80px;height:1px;background:#e8e4da"></div>
<div class="abs" style="left:565px;top:400px;width:60px;height:1px;background:#d2f6cc"></div>
<div class="abs" style="left:625px;top:400px;width:60px;height:1px;background:#d2f6cc"></div>
<div class="abs" style="left:685px;top:400px;width:60px;height:1px;background:#d2f6cc"></div>
<div class="abs" style="left:745px;top:400px;width:60px;height:1px;background:#d2f6cc"></div>
<div class="abs" style="left:805px;top:400px;width:91px;height:1px;background:#e8e4da"></div>
<div class="abs" style="left:896px;top:400px;width:55px;height:1px;background:#e4e0ea"></div>
<div class="abs" style="left:951px;top:400px;width:33px;height:1px;background:#d2f6cc"></div>
<div class="abs" style="left:0;top:317px;width:17px;height:84px;border:1px solid #857a70;border-top:none;background:linear-gradient(#f5f2eb,#e7e0d2);box-shadow:inset 1px 1px 0 rgba(255,255,255,.7)"></div>
<div class="abs cell num" style="left:17px;top:320px;width:20px;padding-right:3px;letter-spacing:-0.2px">11</div>
<div class="abs cell " style="left:40px;top:320px;width:129px;letter-spacing:-0.35px">Aciclovirum</div>
<div class="abs cell " style="left:172px;top:320px;width:170px;letter-spacing:-0.08px">Heviran, tabl. powl., 200 mg</div>
<div class="abs cell " style="left:345px;top:320px;width:80px;letter-spacing:-0.08px">30 tabl. (3</div>
<div class="abs cell " style="left:345px;top:333px;width:80px;letter-spacing:-0.08px">blist.po 10 szt.)</div>
<div class="abs cell num b" style="left:425px;top:352px;width:60px;padding-right:3px;letter-spacing:0.45px">1,00</div>
<div class="abs cell num b" style="left:485px;top:352px;width:80px;padding-right:3px;letter-spacing:0.45px;color:#1c4a1c">11,82 zł</div>
<div class="abs cell num" style="left:565px;top:352px;width:60px;padding-right:3px;letter-spacing:-0.02px">12,83</div>
<div class="abs cell num" style="left:625px;top:352px;width:60px;padding-right:3px;letter-spacing:-0.02px">16,39</div>
<div class="abs cell num" style="left:685px;top:352px;width:60px;padding-right:3px;letter-spacing:-0.02px">12,46</div>
<div class="abs cell num" style="left:745px;top:352px;width:60px;padding-right:3px;letter-spacing:-0.02px">3,56</div>
<div class="abs cell " style="left:808px;top:352px;width:88px;letter-spacing:-0.19px">5909990840014</div>
<div class="abs" style="left:17px;top:484px;width:20px;height:1px;background:#f2f0c4"></div>
<div class="abs" style="left:37px;top:484px;width:132px;height:1px;background:#e8e4da"></div>
<div class="abs" style="left:169px;top:484px;width:173px;height:1px;background:#e8e4da"></div>
<div class="abs" style="left:342px;top:484px;width:83px;height:1px;background:#e8e4da"></div>
<div class="abs" style="left:425px;top:484px;width:60px;height:1px;background:#e8e4da"></div>
<div class="abs" style="left:485px;top:484px;width:80px;height:1px;background:#e8e4da"></div>
<div class="abs" style="left:565px;top:484px;width:60px;height:1px;background:#d2f6cc"></div>
<div class="abs" style="left:625px;top:484px;width:60px;height:1px;background:#d2f6cc"></div>
<div class="abs" style="left:685px;top:484px;width:60px;height:1px;background:#d2f6cc"></div>
<div class="abs" style="left:745px;top:484px;width:60px;height:1px;background:#d2f6cc"></div>
<div class="abs" style="left:805px;top:484px;width:91px;height:1px;background:#e8e4da"></div>
<div class="abs" style="left:896px;top:484px;width:55px;height:1px;background:#e4e0ea"></div>
<div class="abs" style="left:951px;top:484px;width:33px;height:1px;background:#d2f6cc"></div>
<div class="abs" style="left:0;top:401px;width:17px;height:84px;border:1px solid #857a70;border-top:none;background:linear-gradient(#f5f2eb,#e7e0d2);box-shadow:inset 1px 1px 0 rgba(255,255,255,.7)"></div>
<div class="abs cell num" style="left:17px;top:404px;width:20px;padding-right:3px;letter-spacing:-0.2px">12</div>
<div class="abs cell " style="left:40px;top:404px;width:129px;letter-spacing:-0.35px">Aciclovirum</div>
<div class="abs cell " style="left:172px;top:404px;width:170px;letter-spacing:-0.08px">Heviran, tabl. powl., 400 mg</div>
<div class="abs cell " style="left:345px;top:404px;width:80px;letter-spacing:-0.08px">30 tabl. (3</div>
<div class="abs cell " style="left:345px;top:417px;width:80px;letter-spacing:-0.08px">blist.po 10 szt.)</div>
<div class="abs cell num b" style="left:425px;top:436px;width:60px;padding-right:3px;letter-spacing:0.45px">3,00</div>
<div class="abs cell num b" style="left:485px;top:436px;width:80px;padding-right:3px;letter-spacing:0.45px;color:#1c4a1c">60,81 zł</div>
<div class="abs cell num" style="left:565px;top:436px;width:60px;padding-right:3px;letter-spacing:-0.02px">22,90</div>
<div class="abs cell num" style="left:625px;top:436px;width:60px;padding-right:3px;letter-spacing:-0.02px">28,49</div>
<div class="abs cell num" style="left:685px;top:436px;width:60px;padding-right:3px;letter-spacing:-0.02px">24,92</div>
<div class="abs cell num" style="left:745px;top:436px;width:60px;padding-right:3px;letter-spacing:-0.02px">5,59</div>
<div class="abs cell " style="left:808px;top:436px;width:88px;letter-spacing:-0.19px">5909990840113</div>
<div class="abs" style="left:17px;top:568px;width:20px;height:1px;background:#f2f0c4"></div>
<div class="abs" style="left:37px;top:568px;width:132px;height:1px;background:#e8e4da"></div>
<div class="abs" style="left:169px;top:568px;width:173px;height:1px;background:#e8e4da"></div>
<div class="abs" style="left:342px;top:568px;width:83px;height:1px;background:#e8e4da"></div>
<div class="abs" style="left:425px;top:568px;width:60px;height:1px;background:#e8e4da"></div>
<div class="abs" style="left:485px;top:568px;width:80px;height:1px;background:#e8e4da"></div>
<div class="abs" style="left:565px;top:568px;width:60px;height:1px;background:#d2f6cc"></div>
<div class="abs" style="left:625px;top:568px;width:60px;height:1px;background:#d2f6cc"></div>
<div class="abs" style="left:685px;top:568px;width:60px;height:1px;background:#d2f6cc"></div>
<div class="abs" style="left:745px;top:568px;width:60px;height:1px;background:#d2f6cc"></div>
<div class="abs" style="left:805px;top:568px;width:91px;height:1px;background:#e8e4da"></div>
<div class="abs" style="left:896px;top:568px;width:55px;height:1px;background:#e4e0ea"></div>
<div class="abs" style="left:951px;top:568px;width:33px;height:1px;background:#d2f6cc"></div>
<div class="abs" style="left:0;top:485px;width:17px;height:84px;border:1px solid #857a70;border-top:none;background:linear-gradient(#f5f2eb,#e7e0d2);box-shadow:inset 1px 1px 0 rgba(255,255,255,.7)"></div>
<div class="abs cell num" style="left:17px;top:488px;width:20px;padding-right:3px;letter-spacing:-0.2px">13</div>
<div class="abs cell " style="left:40px;top:488px;width:129px;letter-spacing:-0.35px">Aciclovirum</div>
<div class="abs cell " style="left:172px;top:488px;width:170px;letter-spacing:-0.08px">Heviran, tabl. powl., 800 mg</div>
<div class="abs cell " style="left:345px;top:488px;width:80px;letter-spacing:-0.08px">30 tabl. (3</div>
<div class="abs cell " style="left:345px;top:501px;width:80px;letter-spacing:-0.08px">blist.po 10 szt.)</div>
<div class="abs cell num b" style="left:425px;top:520px;width:60px;padding-right:3px;letter-spacing:0.45px">2,00</div>
<div class="abs cell num b" style="left:485px;top:520px;width:80px;padding-right:3px;letter-spacing:0.45px;color:#1c4a1c">72,78 zł</div>
<div class="abs cell num" style="left:565px;top:520px;width:60px;padding-right:3px;letter-spacing:-0.02px">41,21</div>
<div class="abs cell num" style="left:625px;top:520px;width:60px;padding-right:3px;letter-spacing:-0.02px">49,83</div>
<div class="abs cell num" style="left:685px;top:520px;width:60px;padding-right:3px;letter-spacing:-0.02px">49,83</div>
<div class="abs cell num" style="left:745px;top:520px;width:60px;padding-right:3px;letter-spacing:-0.02px">8,62</div>
<div class="abs cell " style="left:808px;top:520px;width:88px;letter-spacing:-0.19px">5909990840229</div>
<div class="abs" style="left:17px;top:600px;width:20px;height:1px;background:#f2f0c4"></div>
<div class="abs" style="left:37px;top:600px;width:132px;height:1px;background:#e8e4da"></div>
<div class="abs" style="left:169px;top:600px;width:173px;height:1px;background:#e8e4da"></div>
<div class="abs" style="left:342px;top:600px;width:83px;height:1px;background:#e8e4da"></div>
<div class="abs" style="left:425px;top:600px;width:60px;height:1px;background:#e8e4da"></div>
<div class="abs" style="left:485px;top:600px;width:80px;height:1px;background:#e8e4da"></div>
<div class="abs" style="left:565px;top:600px;width:60px;height:1px;background:#d2f6cc"></div>
<div class="abs" style="left:625px;top:600px;width:60px;height:1px;background:#d2f6cc"></div>
<div class="abs" style="left:685px;top:600px;width:60px;height:1px;background:#d2f6cc"></div>
<div class="abs" style="left:745px;top:600px;width:60px;height:1px;background:#d2f6cc"></div>
<div class="abs" style="left:805px;top:600px;width:91px;height:1px;background:#e8e4da"></div>
<div class="abs" style="left:896px;top:600px;width:55px;height:1px;background:#e4e0ea"></div>
<div class="abs" style="left:951px;top:600px;width:33px;height:1px;background:#d2f6cc"></div>
<div class="abs" style="left:0;top:569px;width:17px;height:32px;border:1px solid #857a70;border-top:none;background:linear-gradient(#f5f2eb,#e7e0d2);box-shadow:inset 1px 1px 0 rgba(255,255,255,.7)"></div>
<div class="abs cell num" style="left:17px;top:572px;width:20px;padding-right:3px;letter-spacing:-0.2px">25</div>
<div class="abs cell " style="left:40px;top:572px;width:129px;letter-spacing:-0.35px">Acidum alendronicum</div>
<div class="abs cell " style="left:172px;top:572px;width:170px;letter-spacing:-0.08px">Ostenil 70, tabl. , 70 mg</div>
<div class="abs cell " style="left:345px;top:572px;width:80px;letter-spacing:-0.08px">4 tabl. (blist. w</div>
<div class="abs cell " style="left:345px;top:585px;width:80px;letter-spacing:-0.08px">pudełku)</div>
<div class="abs cell num b" style="left:425px;top:578px;width:60px;padding-right:3px;letter-spacing:0.45px">2,00</div>
<div class="abs cell num b" style="left:485px;top:578px;width:80px;padding-right:3px;letter-spacing:0.45px;color:#1c4a1c">35,00 zł</div>
<div class="abs cell num" style="left:565px;top:578px;width:60px;padding-right:3px;letter-spacing:-0.02px">20,16</div>
<div class="abs cell num" style="left:625px;top:578px;width:60px;padding-right:3px;letter-spacing:-0.02px">23,72</div>
<div class="abs cell num" style="left:685px;top:578px;width:60px;padding-right:3px;letter-spacing:-0.02px">13,86</div>
<div class="abs cell num" style="left:745px;top:578px;width:60px;padding-right:3px;letter-spacing:-0.02px">3,56</div>
<div class="abs cell " style="left:808px;top:578px;width:88px;letter-spacing:-0.19px">5909991087418</div>
<div class="abs" style="left:17px;top:632px;width:20px;height:1px;background:#f2f0c4"></div>
<div class="abs" style="left:37px;top:632px;width:132px;height:1px;background:#e8e4da"></div>
<div class="abs" style="left:169px;top:632px;width:173px;height:1px;background:#e8e4da"></div>
<div class="abs" style="left:342px;top:632px;width:83px;height:1px;background:#e8e4da"></div>
<div class="abs" style="left:425px;top:632px;width:60px;height:1px;background:#e8e4da"></div>
<div class="abs" style="left:485px;top:632px;width:80px;height:1px;background:#e8e4da"></div>
<div class="abs" style="left:565px;top:632px;width:60px;height:1px;background:#d2f6cc"></div>
<div class="abs" style="left:625px;top:632px;width:60px;height:1px;background:#d2f6cc"></div>
<div class="abs" style="left:685px;top:632px;width:60px;height:1px;background:#d2f6cc"></div>
<div class="abs" style="left:745px;top:632px;width:60px;height:1px;background:#d2f6cc"></div>
<div class="abs" style="left:805px;top:632px;width:91px;height:1px;background:#e8e4da"></div>
<div class="abs" style="left:896px;top:632px;width:55px;height:1px;background:#e4e0ea"></div>
<div class="abs" style="left:951px;top:632px;width:33px;height:1px;background:#d2f6cc"></div>
<div class="abs" style="left:0;top:601px;width:17px;height:32px;border:1px solid #857a70;border-top:none;background:linear-gradient(#f5f2eb,#e7e0d2);box-shadow:inset 1px 1px 0 rgba(255,255,255,.7)"></div>
<div class="abs cell num" style="left:17px;top:604px;width:20px;padding-right:3px;letter-spacing:-0.2px">27</div>
<div class="abs cell " style="left:40px;top:604px;width:129px;letter-spacing:-0.35px">Acidum alendronicum</div>
<div class="abs cell " style="left:172px;top:604px;width:170px;letter-spacing:-0.08px">Ostolek, tabl. powl., 70 mg</div>
<div class="abs cell " style="left:345px;top:604px;width:80px;letter-spacing:-0.08px">4 tabl. (blist.)</div>
<div class="abs cell num b" style="left:425px;top:610px;width:60px;padding-right:3px;letter-spacing:0.45px">2,00</div>
<div class="abs cell num b" style="left:485px;top:610px;width:80px;padding-right:3px;letter-spacing:0.45px;color:#1c4a1c">32,14 zł</div>
<div class="abs cell num" style="left:565px;top:610px;width:60px;padding-right:3px;letter-spacing:-0.02px">18,84</div>
<div class="abs cell num" style="left:625px;top:610px;width:60px;padding-right:3px;letter-spacing:-0.02px">22,40</div>
<div class="abs cell num" style="left:685px;top:610px;width:60px;padding-right:3px;letter-spacing:-0.02px">13,86</div>
<div class="abs cell num" style="left:745px;top:610px;width:60px;padding-right:3px;letter-spacing:-0.02px">3,56</div>
<div class="abs cell " style="left:808px;top:610px;width:88px;letter-spacing:-0.19px">5909991032517</div>
<div class="abs" style="left:0;top:633px;width:17px;height:24px;border:1px solid #857a70;border-top:none;border-bottom:none;background:linear-gradient(#f5f2eb,#e7e0d2);box-shadow:inset 1px 1px 0 rgba(255,255,255,.7)"></div>
<div class="abs cell num" style="left:17px;top:636px;width:20px;padding-right:3px;letter-spacing:-0.2px">30</div>
<div class="abs cell " style="left:40px;top:636px;width:129px;letter-spacing:-0.35px">Acidum folicum</div>
<div class="abs cell " style="left:172px;top:636px;width:170px;letter-spacing:-0.08px">Acidum Folicum Richter, tabl. , 5</div>
<div class="abs cell " style="left:172px;top:649px;width:170px;letter-spacing:-0.08px;height:8px">mg</div>
<div class="abs cell " style="left:345px;top:636px;width:80px;letter-spacing:-0.08px">30 tabl.</div>
<div class="abs" style="left:0;top:657px;width:984px;height:24px;background:#ebe5d8"></div>
<div class="abs" style="left:984px;top:680px;width:18px;height:18px;background:#f6f4f0"></div>
<div class="abs xbtn" style="left:4px;top:660px"><svg style="left:4px;top:4px" width="7" height="7"><path d="M0.500 0.800l6 5.400M6.500 0.800l-6 5.400" stroke="#fff" stroke-width="1.600" fill="none"/></svg></div>
<svg style="left:-2px;top:655px" width="28" height="28"><ellipse cx="13.900" cy="13.300" rx="12" ry="11.500" fill="none" stroke="#e63c42" stroke-width="2.800"/></svg>
<div class="abs" style="left:26px;top:662px;width:13px;height:13px;border:1px solid #857a70;background:#f6f4f0;box-shadow:0 0 0 1px #fbf9f5"><svg style="left:1px;top:2px" width="9" height="7"><path d="M0.5 3l3 3.200L8.500 0.500" stroke="#6b5a4c" fill="none" stroke-width="1.200"/></svg></div>
<span class="abs" style="left:43px;top:662px;color:#8c877d;white-space:nowrap;letter-spacing:-0.12px">(Tylko na stanie)</span>
<div class="abs btn" style="left:127px;top:660px;width:15px;height:17px"><svg style="left:3px;top:6px" width="8" height="5"><path d="M0.5 0.5l3.500 3.500 3.500-3.500" stroke="#6b5a4c" fill="none" stroke-width="1.200"/></svg></div>
<div class="abs btn" style="left:928px;top:660px;width:52px;height:17px;color:#8f8474;text-align:center;line-height:15px;white-space:nowrap;letter-spacing:0">Edit Filter</div>
<div class="abs" style="left:0;top:680px;width:984px;height:18px;background:linear-gradient(#e6dfd0,#fdfcfa 45%,#fdfcfa 60%,#efeae0)"></div>
<div class="abs btn" style="left:0;top:680px;width:17px;height:17px"><svg style="left:4px;top:4px" width="5" height="8"><path d="M4.500 0.500L1 4l3.500 3.500" stroke="#6b5a4c" fill="none" stroke-width="1.200"/></svg></div>
<div class="abs btn" style="left:967px;top:680px;width:17px;height:17px"><svg style="left:6px;top:4px" width="5" height="8"><path d="M0.500 0.500L4 4 0.500 7.500" stroke="#6b5a4c" fill="none" stroke-width="1.200"/></svg></div>
<div class="abs btn" style="left:38px;top:680px;width:523px;height:17px"><svg style="left:256px;top:4px" width="6" height="7"><path d="M0.500 0v7M2.500 0v7M4.500 0v7" stroke="#8f8474" stroke-width="1"/></svg></div>
<div class="abs btn" style="left:984px;top:1px;width:17px;height:17px"><svg style="left:3px;top:5px" width="9" height="5"><path d="M0.500 4.500l4-4 4 4" stroke="#6b5a4c" fill="none" stroke-width="1.200"/></svg></div>
<div class="abs btn" style="left:984px;top:19px;width:17px;height:12px"><svg style="left:3px;top:2px" width="9" height="6"><path d="M0 0.500h9M0 2.500h9M0 4.500h9" stroke="#6b5a4c" stroke-width="1"/></svg></div>
<div class="abs btn" style="left:984px;top:663px;width:17px;height:17px"><svg style="left:3px;top:6px" width="9" height="5"><path d="M0.500 0.500l4 4 4-4" stroke="#6b5a4c" fill="none" stroke-width="1.200"/></svg></div>
</div></div>
<div class="abs" id="side" style="left:1010px;top:70px;width:234px;height:758px;border:1px solid #857a70;background:#f7f5f1;box-shadow:inset 0 0 0 1px #fffdfa"><div class="abs" style="left:0;top:-1px;width:232px;height:300px">
<div class="abs" style="left:0;top:1px;width:232px;height:22px;background:linear-gradient(#f6f3ec,#eee7d8 40%,#dccdae);border-bottom:1px solid #857a70;box-shadow:inset 0 0 0 1px rgba(255,255,255,.6)"></div>
<span class="abs" style="left:5px;top:6px;letter-spacing:-0.22px;white-space:nowrap">Panel boczny</span>
<div class="abs btn" style="left:194px;top:3px;width:17px;height:17px;background:linear-gradient(#f5f1e8,#e4d9c2)"><svg style="left:0;top:0" width="15" height="15"><path d="M5.500 3.500h4v5h-4zM8.500 3.500v5M4 8.500h7M7.500 9v3.500" stroke="#6b5a4f" fill="none" stroke-width="1"/></svg></div>
<div class="abs btn" style="left:213px;top:3px;width:17px;height:17px;background:linear-gradient(#f5f1e8,#e4d9c2)"><svg style="left:0;top:0" width="15" height="15"><path d="M4 4.500l7 6M11 4.500l-7 6" stroke="#6b5a4f" stroke-width="2" fill="none"/></svg></div>

<!-- Widoki group -->
<div class="abs" style="left:2px;top:34px;width:228px;height:23px;border:1px solid #857a70;border-radius:6px 6px 0 0;background:linear-gradient(#f6f3ed,#eee8dc 50%,#e4dccb)"></div>
<span class="abs b" style="left:40px;top:40px;color:#8c735f;letter-spacing:0.27px;white-space:nowrap">Widoki</span>
<div class="abs btn" style="left:210px;top:37px;width:17px;height:17px"><svg style="left:3px;top:4px" width="9" height="6"><path d="M0.7 5.2L4.5 1.3l3.8 3.9" stroke="#6b5a4f" fill="none" stroke-width="1.900"/></svg></div>
<div class="abs" style="left:2px;top:56px;width:228px;height:38px;border:1px solid #857a70;background:#fff"></div>
<div class="abs" style="left:37px;top:75px;width:192px;height:18px;background:linear-gradient(90deg,#ffffb0,#ffffd8)"></div>
<svg style="left:11px;top:59px" width="30" height="36"><path d="M1.5 7.5h9M1.5 7.5v18h9" stroke="#4a4a4a" fill="none" stroke-width="1"/></svg>
<svg style="left:20px;top:58px" width="17" height="14" viewBox="0 0 17 14"><path d="M1 3.200q0-1.700 1.700-1.700h3.300l2 1.800h6q1.500 0 1.500 1.500v6.200q0 1.500-1.500 1.500h-11.300q-1.700 0-1.700-1.500z" fill="#e8b830" stroke="#b88a18" stroke-width="0.8"/><path d="M1.400 5.200h14v6q0 1-1.200 1h-11.600q-1.200 0-1.200-1z" fill="#ffe47a" stroke="#c89a20" stroke-width="0.5"/></svg>
<svg style="left:20px;top:76px" width="17" height="14" viewBox="0 0 17 14"><path d="M1 3.200q0-1.700 1.700-1.700h3.300l2 1.800h6q1.500 0 1.500 1.500v6.200q0 1.500-1.500 1.500h-11.300q-1.700 0-1.700-1.500z" fill="#e8b830" stroke="#b88a18" stroke-width="0.8"/><path d="M2.800 5.300h11.800q1.200 0 0.900 1.200l-1.300 4.700q-0.300 1-1.400 1h-11q-1.200 0-0.800-1.200z" fill="#ffe880" stroke="#c89a20" stroke-width="0.6"/></svg>
<span class="abs" style="left:41px;top:60px;color:#2c3038;letter-spacing:-0.14px;white-space:nowrap">Urzędowy wykaz leków</span>
<span class="abs b" style="left:41px;top:78px;color:#0a0aa0;text-decoration:underline;letter-spacing:0.46px;white-space:nowrap">Wykaz leków refundowanych</span>
<svg style="left:0;top:0" width="232" height="100"><rect x="4.400" y="72.750" width="223.800" height="21.750" rx="9.500" fill="none" stroke="#e63c46" stroke-width="2.800"/></svg>

<!-- Operacje group -->
<div class="abs" style="left:2px;top:109px;width:228px;height:23px;border:1px solid #857a70;border-radius:6px 6px 0 0;background:linear-gradient(#f6f3ed,#eee8dc 50%,#e4dccb)"></div>
<span class="abs b" style="left:40px;top:115px;color:#8c735f;letter-spacing:0.39px;white-space:nowrap">Operacje</span>
<div class="abs btn" style="left:210px;top:112px;width:17px;height:17px"><svg style="left:3px;top:4px" width="9" height="6"><path d="M0.7 5.2L4.5 1.3l3.8 3.9" stroke="#6b5a4f" fill="none" stroke-width="1.900"/></svg></div>
<div class="abs" style="left:2px;top:131px;width:228px;height:34px;border:1px solid #857a70;background:#f5f2ec"></div>
<div class="abs" style="left:3px;top:132px;width:36px;height:32px;background:#efebe3"></div>
<span class="abs" style="left:45px;top:143px;color:#a39a8e;text-decoration:underline;letter-spacing:-0.03px;white-space:nowrap">Wczytaj stany magazynowe</span>
<svg style="left:0;top:0" width="60" height="170"><defs><radialGradient id="gSg" cx="0.4" cy="0.35" r="0.7"><stop offset="0" stop-color="#40a8ff"/><stop offset="1" stop-color="#0868d8"/></radialGradient></defs><path d="M30.2 151.0 L29.9 152.0 L29.5 152.8 L27.6 152.6 L27.1 153.2 L26.5 153.7 L26.7 155.5 L25.8 155.9 L24.9 156.3 L23.7 154.8 L23.0 154.9 L22.2 154.8 L21.0 156.2 L20.1 155.9 L19.2 155.5 L19.4 153.7 L18.8 153.2 L18.3 152.6 L16.5 152.8 L16.1 151.9 L15.7 151.0 L17.2 149.8 L17.2 149.1 L17.2 148.3 L15.8 147.2 L16.1 146.2 L16.5 145.4 L18.4 145.6 L18.9 145.0 L19.5 144.5 L19.3 142.7 L20.2 142.3 L21.1 141.9 L22.3 143.4 L23.0 143.3 L23.8 143.4 L25.0 142.0 L25.9 142.3 L26.8 142.7 L26.6 144.5 L27.2 145.0 L27.7 145.6 L29.5 145.4 L29.9 146.3 L30.3 147.2 L28.8 148.4 L28.8 149.1 L28.8 149.9Z" fill="url(#gSg)"/><ellipse cx="23.400" cy="148.300" rx="3.500" ry="2.200" transform="rotate(25 23.400 148.300)" fill="#eef8ff"/></svg>
<svg style="left:0;top:0" width="232" height="170"><rect x="9" y="135.100" width="183.200" height="26.500" rx="8.500" fill="none" stroke="#e63c46" stroke-width="2.800"/></svg>
<svg style="left:0;top:0" width="60" height="170"><defs>
<linearGradient id="gBg" x1="0" y1="0" x2="0" y2="1"><stop offset="0" stop-color="#7c7ee0"/><stop offset="1" stop-color="#b8b8fa"/></linearGradient>
<linearGradient id="gSky" x1="0" y1="0" x2="0" y2="1"><stop offset="0" stop-color="#38a8f0"/><stop offset="0.5" stop-color="#b8e4f8"/><stop offset="1" stop-color="#3878d8"/></linearGradient>
<linearGradient id="gHandle" x1="0" y1="0" x2="1" y2="0"><stop offset="0" stop-color="#f8d060"/><stop offset="1" stop-color="#b88018"/></linearGradient>
</defs>
<!-- widoki icon -->
<path d="M4.500 33.900l18-8.900 10 17-17.700 9.700z" fill="#f8f488" stroke="#d8d060" stroke-width="0.4"/>
<path d="M9.600 32.700l20.800-4.500 4.800 15.800-22.300 6.200z" fill="#fdfdff" stroke="#c8ccd8" stroke-width="0.5"/>
<path d="M11.300 34l18-3.800 4 12.600-19.300 5.400z" fill="url(#gSky)"/>
<path d="M25 32l4.300-1.800 4 12.600-4.500 1.200q-2-6-3.800-12z" fill="#1858b8"/>
<path d="M12.500 40.500q3-2.500 6-1.500l1 3.500-6 1.800z" fill="#48b070"/>
<circle cx="22" cy="42.600" r="6.200" fill="#bfe6f4" fill-opacity="0.92" stroke="#9aa8b4" stroke-width="1"/>
<path d="M26.600 48.200l2.200-1.600 6.500 7.200-2.500 1.800z" fill="url(#gHandle)" stroke="#a87818" stroke-width="0.4"/>
<!-- gear -->
<path fill-rule="evenodd" d="M33.5 118.2 L33.2 119.5 L32.9 120.8 L30.6 121.1 L30.1 122.2 L29.5 123.1 L30.5 125.5 L29.7 126.5 L28.8 127.4 L26.7 126.4 L25.8 127.1 L24.9 127.6 L24.6 130.2 L23.5 130.7 L22.3 131.0 L21.0 128.9 L20.0 129.0 L18.9 128.9 L17.6 131.1 L16.4 130.8 L15.3 130.5 L15.0 127.9 L14.1 127.4 L13.3 126.8 L11.1 127.9 L10.3 127.0 L9.5 126.1 L10.4 123.7 L9.9 122.7 L9.4 121.7 L7.1 121.5 L6.7 120.2 L6.5 118.9 L8.4 117.4 L8.3 116.2 L8.4 115.1 L6.5 113.6 L6.8 112.3 L7.1 111.0 L9.4 110.7 L9.9 109.6 L10.5 108.7 L9.5 106.3 L10.3 105.3 L11.2 104.4 L13.3 105.4 L14.2 104.7 L15.1 104.2 L15.4 101.6 L16.5 101.1 L17.7 100.8 L19.0 102.9 L20.0 102.8 L21.1 102.9 L22.4 100.7 L23.6 101.0 L24.7 101.3 L25.0 103.9 L25.9 104.4 L26.7 105.0 L28.9 103.9 L29.7 104.8 L30.5 105.7 L29.6 108.1 L30.1 109.1 L30.6 110.1 L32.9 110.3 L33.3 111.6 L33.5 112.9 L31.6 114.4 L31.7 115.6 L31.6 116.7Z M20.900 107.500c3.200 0.500 4.600 4 3.600 8.500s-3.500 7.800-6.200 7.500-4.200-4.200-3.300-8.700 3.200-7.700 5.900-7.300z" fill="url(#gBg)" stroke="#6a6cc8" stroke-width="0.600" stroke-linejoin="round"/>
</svg>

</div></div>

</body>
</html>
